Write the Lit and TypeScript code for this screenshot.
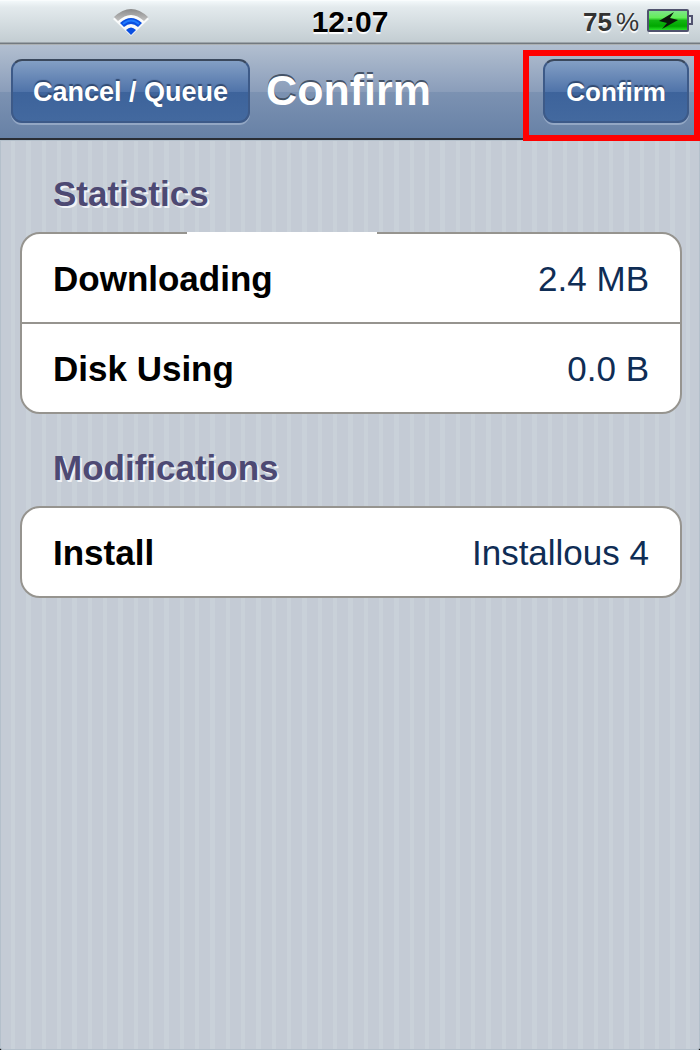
import { LitElement, html, css } from "lit";
import { customElement, property } from "lit/decorators.js";

interface Row {
  label: string;
  value: string;
}

@customElement("status-bar")
class StatusBar extends LitElement {
  static styles = css`
    :host {
      display: grid;
      grid-template-columns: 1fr auto 1fr;
      align-items: center;
      height: 45px;
      box-sizing: border-box;
      padding: 0 7px 3px 7px;
      background: linear-gradient(#f2f8fa 0, #e3eaed 6px, #c3cdd2 41px, #737a80 42px, #737a80 43px, #e4e6e4 44px);
      border-top: 1px solid #f9fcfd;
      color: #000;
    }
    .wifi {
      justify-self: center;
      width: 36px;
      height: 28px;
      margin-right: 56px;
    }
    .time {
      font-size: 30px;
      line-height: 40px;
      font-weight: 700;
      text-shadow: 0 2px 1px #fff;
    }
    .power {
      justify-self: end;
      display: flex;
      align-items: center;
      gap: 8px;
      font-size: 26px;
      line-height: 40px;
      color: #333;
      text-shadow: 0 2px 1px #fff;
    }
    .level {
      display: flex;
      gap: 4px;
    }
    .level b {
      font-weight: 700;
    }
    .battery {
      width: 46px;
      height: 25px;
    }
  `;

  render() {
    return html`
      <svg class="wifi" viewBox="0 0 36 28" role="img" aria-label="Wi-Fi">
        <defs>
          <linearGradient id="arc" x1="0" y1="0" x2="0" y2="1">
            <stop offset="0" stop-color="#8a8a8a" />
            <stop offset="1" stop-color="#c2c2c2" />
          </linearGradient>
        </defs>
        <path d="M18 28 L0 11 Q18 -4 36 11 Z" fill="#fff" opacity=".85" />
        <path d="M1 9 Q18 -7 35 9 L31 13 Q18 1 5 13 Z" fill="url(#arc)" />
        <path d="M7 15 Q18 5 29 15 L25 19 Q18 13 11 19 Z" fill="#0a4fe0" />
        <path d="M10 16 Q18 9 26 16" fill="none" stroke="#1f7bff" stroke-width="2" />
        <path d="M13 22 Q18 17 23 22 L18 27 Z" fill="#0a4fe0" />
      </svg>
      <span class="time">12:07</span>
      <div class="power">
        <span class="level"><b>75</b><span>%</span></span>
        <svg class="battery" viewBox="0 0 46 25" role="img" aria-label="Charging">
          <defs>
            <linearGradient id="charge" x1="0" y1="0" x2="0" y2="1">
              <stop offset="0" stop-color="#7fe58a" />
              <stop offset=".35" stop-color="#62ee58" />
              <stop offset=".5" stop-color="#12b512" />
              <stop offset=".8" stop-color="#00a800" />
              <stop offset="1" stop-color="#28e028" />
            </linearGradient>
          </defs>
          <path d="M2 24h40" stroke="#fff" stroke-width="2" />
          <rect x="1" y="1" width="40" height="21" rx="1" fill="#e4f5e8" stroke="#50526e" stroke-width="2" />
          <rect x="2" y="2" width="38" height="19" fill="url(#charge)" />
          <path d="M42 7h3v8h-3" fill="#dce3ea" stroke="#50526e" stroke-width="2" />
          <path d="M27 3 L12 12 L20 14 L15 20 L31 11 L23 9 Z" fill="#0a180a" />
        </svg>
      </div>
    `;
  }
}

@customElement("nav-bar")
class NavBar extends LitElement {
  static styles = css`
    :host {
      display: flex;
      align-items: flex-start;
      height: 95px;
      box-sizing: border-box;
      padding: 14px 11px 0;
      border-bottom: 2px solid #2a2e35;
      background: linear-gradient(#b2bfd0 0, #8a9dba 47px, #7c92b2 47px, #6781a6 93px);
    }
    button {
      box-sizing: border-box;
      height: 64px;
      margin: 0;
      padding: 2px 21px 0;
      border: 2px solid #3d5a88;
      border-top-color: #3a485d;
      border-radius: 11px;
      background: linear-gradient(#839fc5 0, #4f73a9 31px, #3d639b 31px, #43699f 100%);
      box-shadow: 0 2px 0 #93a7c4;
      color: #fff;
      font-family: "Liberation Sans", Arial, sans-serif;
      font-size: 26px;
      font-weight: 700;
      line-height: 58px;
      text-shadow: 0 -2px 1px #30486f;
      white-space: nowrap;
    }
    .back {
      font-size: 27px;
      padding: 2px 20px 0;
    }
    h1 {
      margin: 0 0 0 16px;
      color: #fff;
      font-size: 43px;
      line-height: 62px;
      font-weight: 700;
      text-shadow: 0 -2px 0 #465468;
    }
    .callout {
      position: relative;
      margin-left: auto;
    }
    .callout::after {
      content: "";
      position: absolute;
      inset: -9px -11px -18px -20px;
      border: 6px solid #f00;
      pointer-events: none;
    }
  `;

  render() {
    return html`
      <button class="back" type="button">Cancel / Queue</button>
      <h1>Confirm</h1>
      <div class="callout"><button type="button">Confirm</button></div>
    `;
  }
}

@customElement("row-group")
class RowGroup extends LitElement {
  @property() heading = "";
  @property({ attribute: false }) rows: Row[] = [];

  static styles = css`
    :host {
      display: block;
    }
    h2 {
      margin: 0;
      padding: 0 33px;
      color: #4d4973;
      font-size: 35px;
      line-height: 40px;
      font-weight: 700;
      text-shadow: 2px 2px 0 #f0f3f7;
    }
    dl {
      position: relative;
      margin: 18px 0 0;
      border: 2px solid #96948f;
      border-radius: 20px;
      background: #fff;
    }
    :host([worn]) dl::before {
      content: "";
      position: absolute;
      top: -2px;
      left: 25%;
      width: 29%;
      height: 2px;
      background: #fff;
    }
    .row {
      display: flex;
      justify-content: space-between;
      padding: 2px 31px 0;
      font-size: 35px;
      line-height: 86px;
    }
    .row + .row {
      border-top: 2px solid #96948f;
    }
    dt {
      font-weight: 700;
      color: #000;
    }
    dd {
      margin: 0;
      color: #0f2d55;
    }
  `;

  render() {
    return html`
      <h2>${this.heading}</h2>
      <dl>
        ${this.rows.map(
          (row) => html`<div class="row"><dt>${row.label}</dt><dd>${row.value}</dd></div>`
        )}
      </dl>
    `;
  }
}

@customElement("app-root")
class AppRoot extends LitElement {
  static styles = css`
    :host {
      display: flex;
      flex-direction: column;
      min-height: 100vh;
      font-family: "Liberation Sans", Arial, sans-serif;
      background:
        radial-gradient(circle at 100% 0, transparent 4px, #111 5px) 0 100% / 4px 4px no-repeat,
        radial-gradient(circle at 0 0, transparent 4px, #111 5px) 100% 100% / 4px 4px no-repeat,
        repeating-linear-gradient(
          90deg,
          #c4cbd5 0 11px,
          #c9d1d9 11px 15px,
          #c4cbd5 15px 26px,
          #c9d1d9 26px 31px,
          #c4cbd5 31px 42px,
          #c9d1d9 42px 46px
        );
    }
    main {
      flex: 1;
      display: flex;
      flex-direction: column;
      gap: 34px;
      padding: 34px 18px 34px 20px;
      box-shadow: inset 0 0 0 1px #b4c0cb;
      border-radius: 0 0 4px 4px;
    }
  `;

  render() {
    return html`
      <status-bar></status-bar>
      <nav-bar></nav-bar>
      <main>
        <row-group
          worn
          heading="Statistics"
          .rows=${[
            { label: "Downloading", value: "2.4 MB" },
            { label: "Disk Using", value: "0.0 B" },
          ]}
        ></row-group>
        <row-group
          heading="Modifications"
          .rows=${[{ label: "Install", value: "Installous 4" }]}
        ></row-group>
      </main>
    `;
  }
}
